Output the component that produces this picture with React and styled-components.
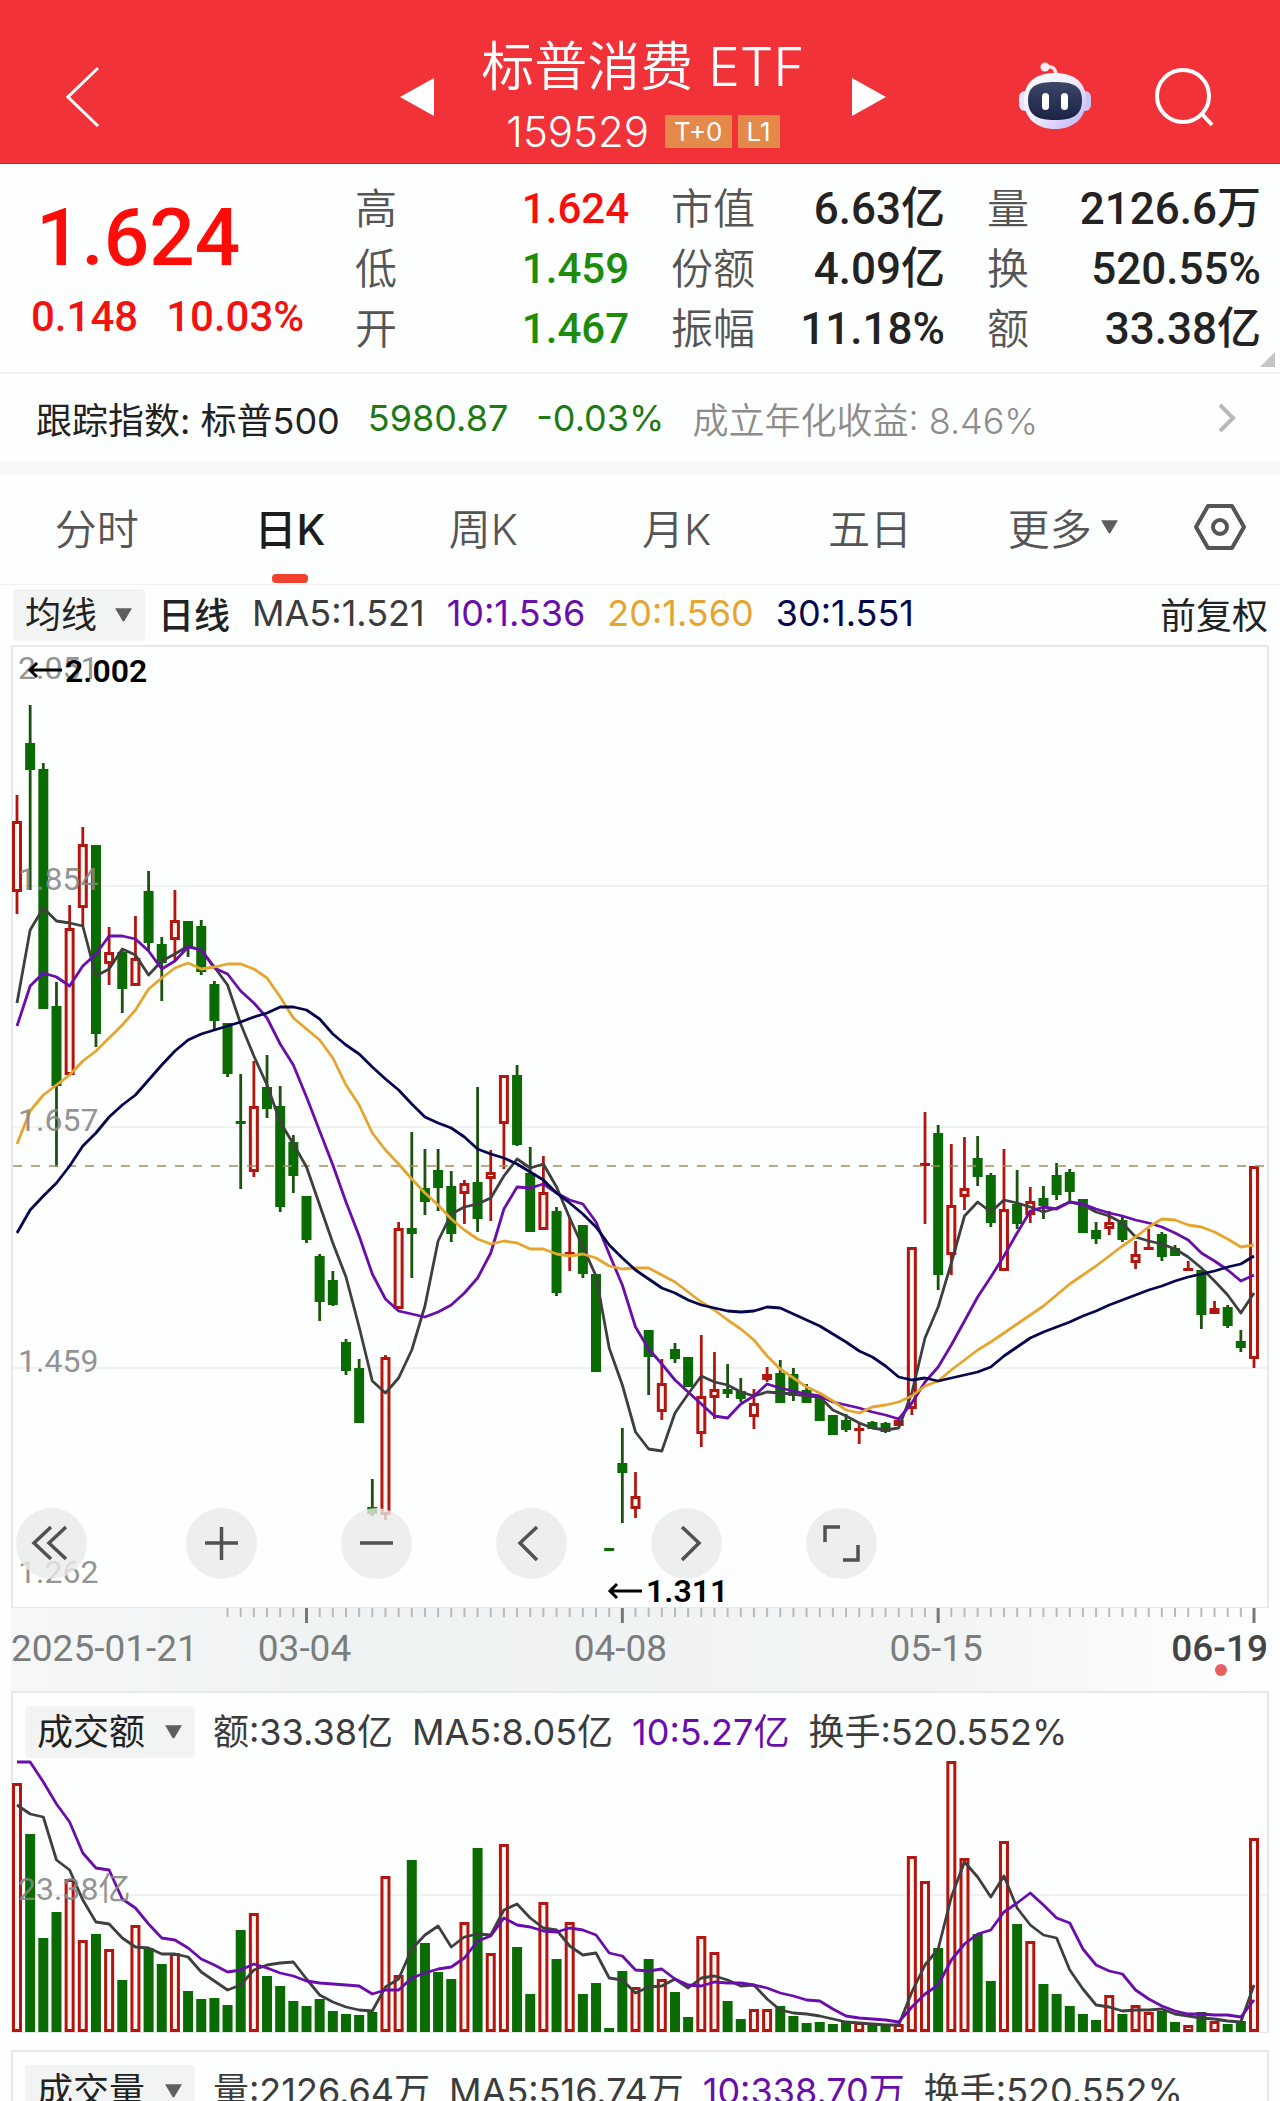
import React, { useState } from "react";
import styled, { createGlobalStyle } from "styled-components";

const GlobalStyle = createGlobalStyle`
  * {
    box-sizing: border-box;
  }
  body {
    margin: 0;
    background-color: #fdfefe;
    font-family: Inter, "Noto Sans CJK SC", sans-serif;
  }
  button,
  select {
    font: inherit;
    color: inherit;
    border: 0;
    padding: 0;
    background: none;
    cursor: pointer;
  }
`;

const Page = styled.div`
  height: 100vh;
  overflow: hidden;
`;

const Header = styled.header`
  display: grid;
  grid-template-columns: 1fr auto 1fr;
  align-items: center;
  height: 164px;
  padding: 30px 60px 0 66px;
  background-color: #f23239;
  border-bottom: 1px solid #c9282e;
  color: #fff;

  button {
    display: grid;
    place-items: center;
  }
`;

const FundSwitch = styled.div`
  display: flex;
  align-items: center;
  justify-content: space-between;
  width: 486px;
`;

const FundName = styled.div`
  display: flex;
  flex-direction: column;
  align-items: center;
  gap: 8px;
  margin-bottom: 8px;

  h1 {
    margin: 0;
    font-size: 53px;
    font-weight: 350;
    line-height: 70px;
    white-space: nowrap;
  }
`;

const FundCode = styled.div`
  display: flex;
  align-items: center;
  gap: 6px;
  font-size: 42px;
  font-weight: 350;
  line-height: 44px;

  & > span:first-child {
    margin-right: 10px;
  }
`;

const Badge = styled.span`
  padding: 0 9px;
  font-size: 26px;
  font-weight: 400;
  line-height: 33px;
  background-color: #e5894a;
`;

const HeaderActions = styled.div`
  display: flex;
  justify-content: flex-end;
  align-items: center;
  gap: 62px;
`;

const Quote = styled.section`
  position: relative;
  display: grid;
  grid-template-columns: 282px repeat(3, 1fr);
  column-gap: 42px;
  height: 210px;
  padding: 15px 19px 0 31px;
  border-bottom: 2px solid #f1f3f3;
`;

const Price = styled.div`
  color: #fd0d08;
  font-family: Roboto, "Noto Sans CJK SC", sans-serif;
  font-weight: 500;

  strong {
    display: block;
    padding: 14px 0 0 5px;
    font-size: 80px;
    font-weight: 500;
    line-height: 90px;
  }

  p {
    display: flex;
    gap: 28px;
    margin: 8px 0 0;
    font-size: 42px;
    line-height: 52px;
    color: #f01310;
  }
`;

const Stats = styled.dl`
  margin: 0;

  div {
    display: flex;
    justify-content: space-between;
    line-height: 60px;
    white-space: nowrap;
  }
  dt {
    font-size: 42px;
    font-weight: 350;
    color: #555;
  }
`;

const StatValue = styled.dd`
  margin: 0;
  font-family: Roboto, "Noto Sans CJK SC", sans-serif;
  font-size: ${({ $tone }) => ($tone ? 42 : 44)}px;
  font-weight: 500;
  color: ${({ $tone }) =>
    $tone === "up" ? "#f80f0b" : $tone === "down" ? "#1c8c0a" : "#232323"};
`;

const Corner = styled.i`
  position: absolute;
  right: 5px;
  bottom: 5px;
  border-left: 15px solid transparent;
  border-bottom: 15px solid #c4c6c6;
`;

const IndexRow = styled.a`
  display: flex;
  align-items: center;
  height: 100px;
  padding: 0 43px 0 36px;
  border-bottom: 12px solid #f6f7f7;
  font-size: 36px;
  font-weight: 400;
  color: #222;
  text-decoration: none;
  white-space: nowrap;

  svg {
    margin-left: auto;
  }
`;

const IndexPart = styled.span`
  margin-right: 28px;
  font-weight: ${({ $light }) => ($light ? 350 : 400)};
  color: ${({ $color }) => $color || "inherit"};
`;

const Tabs = styled.nav`
  display: grid;
  grid-template-columns: repeat(6, 1fr) 120px;
  height: 111px;
  border-bottom: 1px solid #f0f2f2;
`;

const Tab = styled.button`
  display: flex;
  align-items: center;
  justify-content: center;
  gap: 8px;
  position: relative;
  padding-bottom: 5px !important;
  font-size: 42px !important;
  font-weight: ${({ $active }) => ($active ? 500 : 350)} !important;
  color: ${({ $active }) => ($active ? "#1d1d1d" : "#555")} !important;

  &::after {
    content: "";
    display: ${({ $active }) => ($active ? "block" : "none")};
    position: absolute;
    bottom: 1px;
    width: 36px;
    height: 9px;
    border-radius: 4px;
    background-color: #f4402f;
  }
`;

const Legend = styled.div`
  display: flex;
  align-items: center;
  gap: ${({ $inset }) => ($inset ? 19 : 22)}px;
  height: ${({ $height }) => $height}px;
  padding: ${({ $inset }) => ($inset ? "11px 12px 0" : "0 12px 0 13px")};
  font-size: 36px;
  color: #3c3c3c;
  white-space: nowrap;
`;

const LegendItem = styled.span`
  padding-bottom: 5px;
  color: ${({ $color }) => $color || "inherit"};
  font-weight: ${({ $strong }) => ($strong ? 500 : 400)};
`;

const Adjust = styled.button`
  margin-left: auto;
  padding-bottom: 5px !important;
  color: #222 !important;
`;

const Picker = styled.label`
  display: flex;
  align-items: center;
  gap: ${({ $wide }) => ($wide ? 18 : 16)}px;
  height: 52px;
  padding: 0 12px;
  margin-right: ${({ $wide }) => ($wide ? -1 : -9)}px;
  border-radius: 4px;
  background-color: #f2f4f4;
  color: #222;

  select {
    appearance: none;
    line-height: 52px;
    outline: none;
  }
`;

const Panel = styled.section`
  position: relative;
  margin: 0 11px;
  border: 2px solid #e5e9e9;
  border-bottom-width: ${({ $flush }) => ($flush ? 0 : 1)}px;

  & > svg {
    display: block;
    overflow: visible;
  }
`;

const Controls = styled.div`
  position: absolute;
  left: 3px;
  bottom: 28px;
  display: flex;
  gap: 84px;

  button:first-child {
    margin-right: 15px;
  }
`;

const RoundButton = styled.button`
  display: grid;
  place-items: center;
  width: 71px;
  height: 71px;
  border-radius: 50%;
  background-color: rgba(232, 235, 235, 0.8) !important;
`;

const Axis = styled.div`
  margin: 0 11px;
  background: linear-gradient(to right, #f6f8f8, #eff2f2 30%, #f3f5f5 75%, #fdfefe);

  svg {
    display: block;
  }
`;

const Spacer = styled.div`
  height: 17px;
`;

const ScaleText = styled.text`
  font-family: Roboto, "Noto Sans CJK SC", sans-serif;
  font-size: 32px;
  fill: #858585;
  fill-opacity: 0.9;
`;

const MarkText = styled.text`
  font-family: Roboto, sans-serif;
  font-size: 32px;
  font-weight: 600;
  fill: #000;
`;

const DateText = styled.text`
  font-family: Roboto, sans-serif;
  font-size: 37px;
  font-weight: ${({ $today }) => ($today ? 500 : 400)};
  fill: ${({ $today }) => ($today ? "#444" : "#7b7d7d")};
`;

// [rising, high, body top, body bottom, low]
const candles = [
  [1, 150, 176, 247, 269], [0, 60, 98, 125, 245], [0, 118, 124, 364, 364],
  [0, 337, 361, 441, 522], [1, 260, 283, 430, 430], [1, 182, 199, 263, 281],
  [0, 200, 200, 389, 402], [1, 282, 307, 319, 340], [0, 305, 307, 344, 368],
  [1, 271, 313, 341, 341], [0, 226, 246, 298, 306], [0, 292, 299, 318, 356],
  [1, 245, 275, 295, 316], [0, 276, 276, 303, 312], [0, 275, 281, 327, 330],
  [0, 336, 339, 376, 384], [0, 378, 378, 429, 432], [0, 429, 476, 479, 544],
  [1, 416, 461, 527, 532], [0, 410, 442, 464, 473], [0, 441, 461, 562, 567],
  [0, 490, 497, 531, 548], [0, 551, 551, 595, 598], [0, 609, 611, 657, 676],
  [0, 626, 635, 660, 661], [0, 694, 697, 726, 730], [0, 714, 723, 778, 778],
  [0, 834, 862, 869, 871], [1, 710, 712, 870, 875], [1, 577, 583, 664, 664],
  [0, 487, 583, 589, 633], [0, 504, 543, 557, 570], [0, 504, 525, 543, 566],
  [0, 526, 541, 589, 597], [1, 535, 538, 549, 579], [0, 442, 537, 574, 587],
  [1, 505, 527, 534, 576], [1, 430, 430, 479, 524], [0, 420, 430, 500, 501],
  [0, 502, 528, 587, 587], [1, 511, 547, 585, 585], [0, 562, 566, 648, 651],
  [1, 572, 607, 609, 626], [0, 580, 580, 629, 633], [0, 629, 629, 727, 727],
  [0, 903, 903, 906, 906], [0, 783, 818, 828, 878], [1, 827, 851, 864, 873],
  [0, 685, 685, 712, 750], [1, 714, 738, 767, 775], [0, 698, 704, 714, 718],
  [0, 712, 712, 742, 742], [1, 690, 751, 789, 802], [1, 707, 744, 753, 774],
  [0, 719, 744, 749, 753], [0, 733, 746, 754, 757], [1, 744, 758, 772, 784],
  [1, 722, 729, 735, 737], [0, 715, 728, 758, 758], [0, 723, 729, 751, 756],
  [0, 739, 745, 758, 758], [0, 751, 751, 776, 776], [0, 770, 770, 790, 790],
  [0, 769, 775, 785, 787], [1, 777, 783, 786, 799], [0, 776, 777, 784, 784],
  [0, 777, 778, 787, 788], [1, 775, 775, 781, 781], [1, 602, 602, 764, 770],
  [1, 467, 518, 521, 579], [0, 480, 488, 630, 645], [1, 499, 560, 610, 630],
  [1, 492, 543, 552, 565], [0, 491, 513, 532, 541], [0, 528, 530, 578, 582],
  [1, 504, 564, 626, 626], [0, 525, 559, 579, 584], [1, 542, 556, 570, 578],
  [0, 541, 553, 561, 574], [0, 518, 530, 550, 555], [0, 524, 527, 547, 556],
  [0, 554, 554, 588, 588], [0, 577, 585, 594, 599], [1, 566, 577, 584, 590],
  [0, 572, 575, 595, 597], [1, 596, 609, 618, 624], [1, 584, 602, 605, 605],
  [0, 587, 589, 612, 616], [0, 600, 603, 611, 611], [1, 616, 623, 626, 626],
  [0, 625, 625, 670, 684], [1, 656, 663, 669, 669], [0, 660, 662, 681, 683],
  [0, 685, 696, 703, 707], [1, 521, 521, 714, 723],
];

const priceLines = [
  {
    color: "#3f3f3f",
    points: [
      358, 285, 263, 276, 278, 281, 331, 324, 304, 310, 330, 316, 309, 301, 305,
      322, 340, 379, 411, 440, 477, 499, 522, 560, 598, 632, 682, 736, 748, 733,
      705, 661, 596, 569, 562, 559, 553, 531, 514, 523, 519, 542, 573, 602, 631,
      703, 740, 787, 804, 806, 768, 749, 731, 737, 740, 747, 751, 747, 748, 749,
      751, 752, 765, 771, 778, 783, 785, 783, 748, 693, 662, 618, 571, 557, 567,
      555, 558, 562, 567, 563, 557, 560, 567, 571, 578, 592, 596, 599, 604, 612,
      623, 636, 650, 668, 648,
    ],
  },
  {
    color: "#6a0dad",
    points: [
      381, 341, 328, 332, 341, 321, 309, 291, 291, 294, 306, 324, 316, 302, 305,
      323, 329, 346, 358, 373, 399, 420, 452, 486, 520, 557, 591, 629, 654, 666,
      669, 672, 667, 660, 648, 633, 608, 564, 542, 543, 539, 548, 555, 559, 577,
      609, 640, 682, 704, 719, 735, 747, 759, 771, 773, 759, 751, 739, 743, 746,
      749, 751, 757, 760, 763, 767, 770, 774, 758, 737, 722, 700, 676, 652, 632,
      611, 588, 566, 562, 564, 557, 559, 564, 568, 571, 575, 578, 582, 588, 595,
      608, 616, 625, 636, 630,
    ],
  },
  {
    color: "#e5a52f",
    points: [
      499, 466, 450, 440, 430, 416, 406, 393, 380, 365, 344, 333, 323, 318, 324,
      322, 319, 319, 324, 333, 352, 373, 384, 395, 413, 440, 460, 488, 505, 519,
      534, 548, 560, 574, 585, 594, 599, 596, 598, 604, 604, 609, 611, 609, 613,
      621, 624, 623, 623, 630, 637, 647, 657, 665, 675, 684, 695, 711, 724, 733,
      742, 748, 756, 765, 768, 762, 760, 757, 751, 741, 736, 725, 715, 705, 697,
      688, 679, 670, 661, 650, 639, 630, 621, 611, 601, 592, 582, 574, 575, 580,
      582, 587, 594, 602, 600,
    ],
  },
  {
    color: "#06064e",
    points: [
      588, 565, 551, 538, 521, 501, 488, 472, 460, 450, 435, 420, 406, 395, 389,
      385, 381, 377, 372, 368, 362, 362, 365, 374, 389, 400, 409, 422, 434, 445,
      459, 472, 478, 483, 492, 504, 509, 513, 519, 527, 535, 548, 558, 569, 582,
      600, 613, 625, 634, 643, 648, 655, 660, 663, 666, 667, 666, 662, 663, 669,
      675, 681, 689, 697, 706, 712, 721, 732, 735, 733, 736, 733, 730, 727, 722,
      711, 702, 693, 687, 682, 677, 671, 666, 660, 655, 650, 645, 641, 636, 632,
      629, 626, 622, 619, 611,
    ],
  },
];

const turnover = [
  249, 198, 94, 120, 153, 92, 98, 83, 52, 107, 84, 68, 79, 41, 33, 34, 27, 102,
  119, 56, 46, 31, 26, 33, 21, 18, 17, 20, 156, 57, 172, 89, 60, 53, 110, 184,
  79, 188, 85, 38, 130, 73, 110, 38, 49, 4, 61, 45, 73, 53, 40, 15, 96, 80, 31,
  13, 23, 23, 26, 16, 9, 10, 8, 10, 10, 8, 7, 8, 176, 151, 84, 271, 174, 98, 51,
  191, 108, 91, 48, 38, 26, 18, 12, 37, 18, 27, 20, 21, 10, 7, 20, 11, 8, 11,
  194,
];

const turnoverLines = [
  {
    color: "#3f3f3f",
    points: [
      227, 218, 215, 172, 162, 132, 110, 108, 94, 85, 84, 78, 78, 75, 60, 51, 42,
      47, 62, 67, 69, 70, 53, 37, 30, 25, 22, 21, 45, 53, 83, 97, 106, 85, 95, 98,
      97, 122, 128, 114, 104, 102, 86, 77, 79, 54, 52, 39, 45, 46, 53, 44, 54, 56,
      52, 46, 47, 33, 22, 19, 18, 16, 13, 10, 9, 8, 7, 7, 40, 67, 83, 135, 170,
      155, 135, 156, 124, 107, 97, 94, 62, 43, 27, 25, 21, 22, 22, 23, 18, 16, 14,
      13, 11, 10, 47,
    ],
  },
  {
    color: "#6a0dad",
    points: [
      270, 270, 250, 228, 210, 179, 164, 162, 133, 124, 108, 94, 92, 84, 73, 67,
      60, 62, 68, 64, 59, 56, 51, 49, 48, 47, 46, 38, 42, 42, 54, 59, 63, 65, 74,
      91, 96, 114, 107, 105, 101, 100, 104, 102, 97, 79, 76, 62, 61, 63, 53, 47,
      46, 50, 49, 49, 47, 44, 39, 36, 32, 31, 23, 16, 14, 13, 12, 10, 25, 38, 47,
      72, 88, 98, 102, 120, 129, 139, 127, 114, 109, 83, 67, 61, 58, 42, 33, 26,
      21, 18, 18, 17, 17, 15, 32,
    ],
  },
];

const WIDTH = 1254;
const TURNOVER_HEIGHT = 273;
const RISE = "#b3160f";
const FALL = "#0a6b02";

const xAt = (index) => 4 + (index * 1237) / 94;

const toPoints = (values) => values.map((y, i) => `${xAt(i)},${y}`).join(" ");

const stats = [
  [
    ["高", "1.624", "up"],
    ["低", "1.459", "down"],
    ["开", "1.467", "down"],
  ],
  [
    ["市值", "6.63亿"],
    ["份额", "4.09亿"],
    ["振幅", "11.18%"],
  ],
  [
    ["量", "2126.6万"],
    ["换", "520.55%"],
    ["额", "33.38亿"],
  ],
];

const tabs = ["分时", "日K", "周K", "月K", "五日"];

const Caret = ({ size = 19 }) => (
  <svg width={size} height={size - 3} viewBox="0 0 18 15" aria-hidden="true">
    <path d="M1 1h16L10 13q-1 1.500-2 0z" fill="#5b5f5f" />
  </svg>
);

const Robot = () => (
  <svg width="74" height="70" viewBox="0 0 74 70" aria-hidden="true">
    <defs>
      <linearGradient id="shell" x1="0" y1="0" x2="1" y2="1">
        <stop offset="0" stopColor="#fff" />
        <stop offset="0.5" stopColor="#f0ebff" />
        <stop offset="1" stopColor="#b9aef3" />
      </linearGradient>
      <linearGradient id="visor" x1="0" y1="0" x2="0" y2="1">
        <stop offset="0" stopColor="#3c4668" />
        <stop offset="1" stopColor="#1a2344" />
      </linearGradient>
    </defs>
    <path d="M28 5q10-2 10 9" fill="none" stroke="#fbe4ea" strokeWidth="3.500" />
    <circle cx="27" cy="5" r="4.500" fill="#fdeef2" />
    <rect x="1" y="29" width="14" height="20" rx="6" fill="#e9e4fb" />
    <rect x="59" y="29" width="14" height="20" rx="6" fill="#cdc4f6" />
    <path
      d="M37 11c19 0 31 9 31 27 0 19-13 29-31 29S6 57 6 38c0-18 12-27 31-27z"
      fill="url(#shell)"
    />
    <path
      d="M37 20c18 0 27 4 27 18 0 15-9 20-27 20s-27-5-27-20c0-14 9-18 27-18z"
      fill="url(#visor)"
    />
    <rect x="24" y="31" width="7" height="17" rx="3.500" fill="#fff" />
    <rect x="43" y="31" width="7" height="17" rx="3.500" fill="#fff" />
  </svg>
);

const controls = [
  ["最早", "M35 19L18 35l17 16M50 19L33 35l17 16"],
  ["放大", "M19 35h33M35.500 19v33"],
  ["缩小", "M19 35h33"],
  ["向左", "M41 19L24 35l17 17"],
  ["向右", "M31 19l17 16-17 17"],
  ["全屏", "M19 34V19h15M52 37v15H37"],
];

const Arrow = ({ x, y }) => (
  <path
    d={`M${x + 34} ${y}H${x + 2}M${x + 9} ${y - 7}l-7 7 7 7`}
    fill="none"
    stroke="#000"
    strokeWidth="3"
  />
);

const Lines = ({ lines }) =>
  lines.map(({ color, points }) => (
    <polyline
      key={color}
      points={toPoints(points)}
      fill="none"
      stroke={color}
      strokeWidth="2.800"
      strokeLinejoin="round"
    />
  ));

const Bar = ({ index, top, height, rising }) =>
  rising && height > 4 ? (
    <rect
      x={xAt(index) - 3.5}
      y={top + 1.5}
      width="7"
      height={height - 3}
      fill="#fff6f3"
      stroke={RISE}
      strokeWidth="3"
    />
  ) : (
    <rect
      x={xAt(index) - 5}
      y={top}
      width="10"
      height={height}
      fill={rising ? RISE : FALL}
    />
  );

const PriceChart = () => (
  <svg viewBox={`0 0 ${WIDTH} 960`} width="100%" role="img" aria-label="日K">
    {[239, 480, 721].map((y) => (
      <line key={y} x1="0" x2={WIDTH} y1={y} y2={y} stroke="#f0f2f2" strokeWidth="2" />
    ))}
    <g transform="translate(0 -2)">
      {candles.map(([rising, high, top, bottom, low], i) => (
        <g key={i}>
          <line
            x1={xAt(i)}
            x2={xAt(i)}
            y1={high}
            y2={low}
            stroke={rising ? RISE : "#1c510e"}
            strokeWidth="2.800"
          />
          <Bar index={i} top={top} height={bottom - top} rising={rising} />
        </g>
      ))}
      <line
        x1="0"
        x2={WIDTH}
        y1="521"
        y2="521"
        stroke="#a08c62"
        strokeWidth="1.500"
        strokeDasharray="9 9"
      />
      <Lines lines={priceLines} />
      {["2.051", "1.854", "1.657", "1.459", "1.262"].map((label, i) => (
        <ScaleText key={label} x="5" y={[34, 245, 486, 727, 938][i]}>
          {label}
        </ScaleText>
      ))}
      <Arrow x={15} y={25} />
      <MarkText x="52" y="37">
        2.002
      </MarkText>
      <Arrow x={595} y={946} />
      <MarkText x="633" y="957">
        1.311
      </MarkText>
    </g>
  </svg>
);

const DateAxis = () => (
  <svg viewBox="0 0 1258 83" width="100%" role="img" aria-label="日期">
    {candles.map((_, i) => {
      if (i < 16) return null;
      const major = i % 24 === 22;
      return (
        <line
          key={i}
          x1={xAt(i) + 2}
          x2={xAt(i) + 2}
          y1="0"
          y2={major ? 15 : 9}
          stroke={major ? "#777" : "#b9baba"}
          strokeWidth={major ? 3 : 2}
        />
      );
    })}
    <DateText x="0" y="53">
      2025-01-21
    </DateText>
    <DateText x={xAt(22)} y="53" textAnchor="middle">
      03-04
    </DateText>
    <DateText x={xAt(46)} y="53" textAnchor="middle">
      04-08
    </DateText>
    <DateText x={xAt(70)} y="53" textAnchor="middle">
      05-15
    </DateText>
    <DateText x="1257" y="53" textAnchor="end" $today>
      06-19
    </DateText>
    <circle cx="1210" cy="62" r="6" fill="#ea5f63" />
  </svg>
);

const TurnoverChart = () => (
  <svg
    viewBox={`0 0 ${WIDTH} ${TURNOVER_HEIGHT}`}
    width="100%"
    role="img"
    aria-label="成交额"
  >
    <line x1="0" x2={WIDTH} y1="136" y2="136" stroke="#f0f2f2" strokeWidth="2" />
    {turnover.map((value, i) => (
      <Bar
        key={i}
        index={i}
        top={TURNOVER_HEIGHT - value}
        height={value}
        rising={candles[i][0]}
      />
    ))}
    <Lines
      lines={turnoverLines.map((line) => ({
        ...line,
        points: line.points.map((value) => TURNOVER_HEIGHT - value),
      }))}
    />
    <ScaleText x="5" y="141">
      23.38亿
    </ScaleText>
  </svg>
);

const IndicatorLegend = ({ name, items }) => (
  <Legend $height={66} $inset>
    <Picker $wide>
      <select aria-label="指标" defaultValue={name}>
        <option>{name}</option>
      </select>
      <Caret />
    </Picker>
    {items.map(([text, color]) => (
      <LegendItem key={text} $color={color}>
        {text}
      </LegendItem>
    ))}
  </Legend>
);

const App = () => {
  const [active, setActive] = useState("日K");

  return (
    <Page>
      <GlobalStyle />
      <Header>
        <div>
          <button aria-label="返回">
            <svg width="34" height="62" viewBox="0 0 34 62">
              <path d="M32 2L2 31l30 29" fill="none" stroke="#fff" strokeWidth="3" />
            </svg>
          </button>
        </div>
        <FundSwitch>
          <button aria-label="上一只">
            <svg width="34" height="38" viewBox="0 0 34 38">
              <path d="M34 0v38L0 19z" fill="#fff" />
            </svg>
          </button>
          <FundName>
            <h1>标普消费 ETF</h1>
            <FundCode>
              <span>159529</span>
              <Badge>T+0</Badge>
              <Badge>L1</Badge>
            </FundCode>
          </FundName>
          <button aria-label="下一只">
            <svg width="34" height="38" viewBox="0 0 34 38">
              <path d="M0 0v38l34-19z" fill="#fff" />
            </svg>
          </button>
        </FundSwitch>
        <HeaderActions>
          <button aria-label="智能助手">
            <Robot />
          </button>
          <button aria-label="搜索">
            <svg width="66" height="62" viewBox="0 0 66 62">
              <g fill="none" stroke="#fff" strokeWidth="4">
                <circle cx="29" cy="30" r="26" />
                <path d="M48 48l10 11" />
              </g>
            </svg>
          </button>
        </HeaderActions>
      </Header>

      <Quote>
        <Price>
          <strong>1.624</strong>
          <p>
            <span>0.148</span>
            <span>10.03%</span>
          </p>
        </Price>
        {stats.map((column, i) => (
          <Stats key={i}>
            {column.map(([label, value, tone]) => (
              <div key={label}>
                <dt>{label}</dt>
                <StatValue $tone={tone}>{value}</StatValue>
              </div>
            ))}
          </Stats>
        ))}
        <Corner />
      </Quote>

      <IndexRow href="#index">
        <IndexPart>跟踪指数: 标普500</IndexPart>
        <IndexPart $color="#1f7a14">5980.87</IndexPart>
        <IndexPart $color="#1f7a14">-0.03%</IndexPart>
        <IndexPart $color="#8c8c8c" $light>
          成立年化收益: 8.46%
        </IndexPart>
        <svg width="20" height="30" viewBox="0 0 20 30" aria-hidden="true">
          <path d="M3 2l13 13L3 28" fill="none" stroke="#b9b9b9" strokeWidth="4" />
        </svg>
      </IndexRow>

      <Tabs>
        {tabs.map((tab) => (
          <Tab key={tab} $active={tab === active} onClick={() => setActive(tab)}>
            {tab}
          </Tab>
        ))}
        <Tab aria-haspopup="menu">
          更多
          <Caret />
        </Tab>
        <Tab aria-label="设置">
          <svg width="54" height="50" viewBox="0 0 54 50">
            <g fill="none" stroke="#555" strokeWidth="4" strokeLinejoin="round">
              <path d="M15 4h24l12 21-12 21H15L3 25z" />
              <circle cx="27" cy="25" r="7" />
            </g>
          </svg>
        </Tab>
      </Tabs>

      <Legend $height={60}>
        <Picker>
          <select aria-label="均线类型" defaultValue="均线">
            <option>均线</option>
          </select>
          <Caret />
        </Picker>
        <LegendItem $color="#222" $strong>
          日线
        </LegendItem>
        <LegendItem>MA5:1.521</LegendItem>
        <LegendItem $color="#6a0dad">10:1.536</LegendItem>
        <LegendItem $color="#e5a52f">20:1.560</LegendItem>
        <LegendItem $color="#06064e">30:1.551</LegendItem>
        <Adjust>前复权</Adjust>
      </Legend>

      <Panel>
        <PriceChart />
        <Controls>
          {controls.map(([label, d]) => (
            <RoundButton key={label} aria-label={label}>
              <svg width="71" height="71" viewBox="0 0 71 71">
                <path d={d} fill="none" stroke="#505252" strokeWidth="3.500" />
              </svg>
            </RoundButton>
          ))}
        </Controls>
      </Panel>

      <Axis>
        <DateAxis />
      </Axis>

      <Panel>
        <IndicatorLegend
          name="成交额"
          items={[
            ["额:33.38亿"],
            ["MA5:8.05亿"],
            ["10:5.27亿", "#6a0dad"],
            ["换手:520.552%"],
          ]}
        />
        <TurnoverChart />
      </Panel>
      <Spacer />
      <Panel $flush>
        <IndicatorLegend
          name="成交量"
          items={[
            ["量:2126.64万"],
            ["MA5:516.74万"],
            ["10:338.70万", "#6a0dad"],
            ["换手:520.552%"],
          ]}
        />
      </Panel>
    </Page>
  );
};

export default App;
